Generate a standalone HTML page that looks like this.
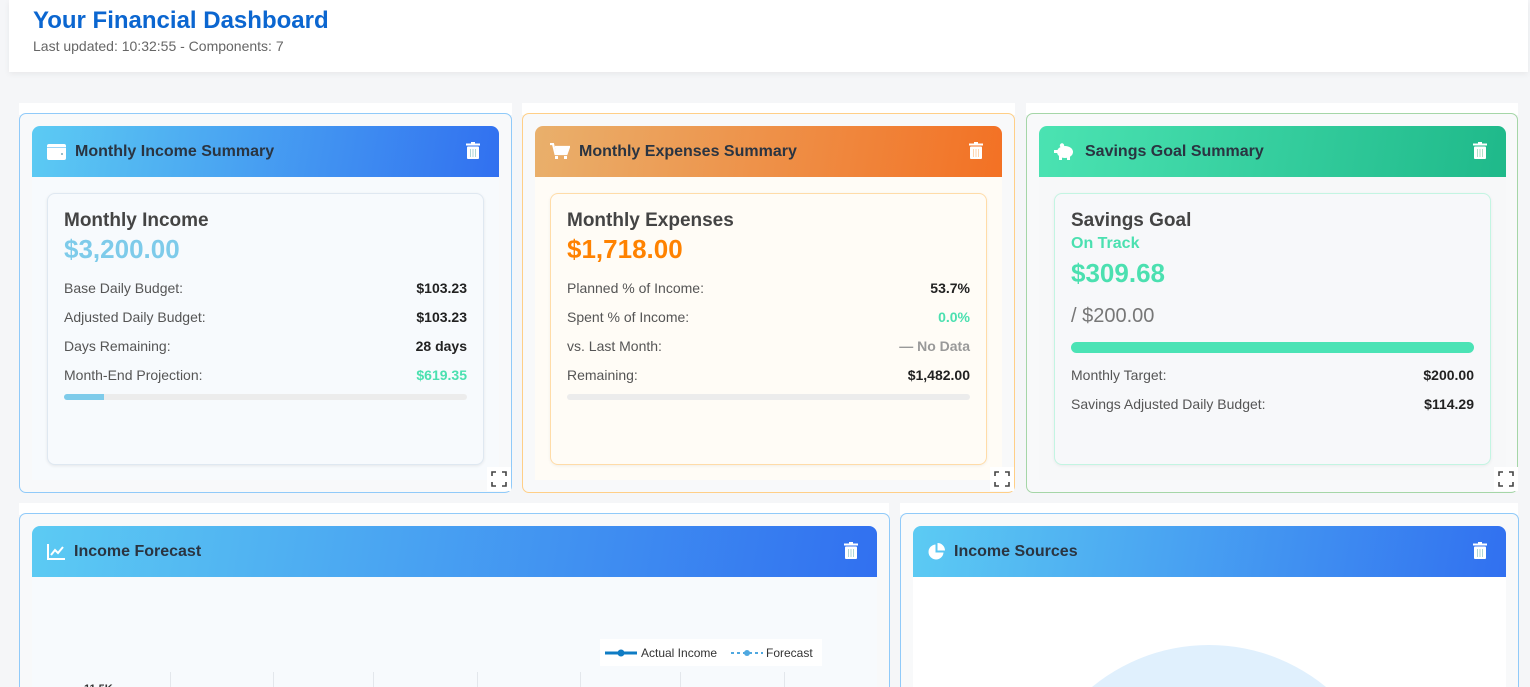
<!DOCTYPE html>
<html style="overflow:hidden;height:687px"><head><meta charset="utf-8"><style>
*{box-sizing:border-box;margin:0;padding:0}
body{width:1530px;height:687px;overflow:hidden;background:#f5f6f8;font-family:"Liberation Sans",sans-serif;position:relative}
.a{position:absolute}
.top{left:9px;top:0;width:1519px;height:72px;background:#fff;box-shadow:0 2px 6px rgba(0,0,0,.06)}
.top h1{position:absolute;left:24px;top:7px;font-size:24px;color:#0b66d0;font-weight:bold}
.top p{position:absolute;left:24px;top:38px;font-size:14px;color:#666}
.strip{background:#fff;height:12px}
.box{border-radius:7px;background:#f8f9fa;overflow:hidden}
.hdr{border-radius:8px 8px 0 0;height:51px;color:#2a3441;font-weight:bold;font-size:16px;display:flex;align-items:center;padding-left:15px}
.hdr svg.ic{margin-right:9px}
.trash{position:absolute;right:19px;top:16px}
.inner{border-radius:8px;padding:15px 16px}
.inner h2{font-size:19px;color:#444;font-weight:bold;line-height:24px}
.amt{font-size:26px;font-weight:bold;line-height:32px}
.row{display:flex;justify-content:space-between;font-size:14px;color:#555;height:29px;align-items:center}
.row b{color:#222}
.bar{height:6px;border-radius:3px;background:#ececec;margin-top:5px;overflow:hidden}
</style></head><body>
<div class="a top"><h1>Your Financial Dashboard</h1><p>Last updated: 10:32:55 - Components: 7</p></div>

<!-- card 1 -->
<div class="a strip" style="left:19px;top:103px;width:493px"></div>
<div class="a box" style="left:19px;top:113px;width:493px;height:380px;border:1px solid #90caf9"></div>
<div class="a hdr" style="left:32px;top:126px;width:467px;background:linear-gradient(100deg,#5ccbf3,#3170f0)">
<svg class="ic" width="19" height="16" viewBox="0 0 19 16"><rect x="0" y="0" width="19" height="16" rx="2" fill="#fff"/><rect x="0" y="3" width="19" height="1" fill="#9cd4f7"/><circle cx="15" cy="10" r="1" fill="#7ab"/></svg>Monthly Income Summary
<svg class="trash" width="14" height="17" viewBox="0 0 14 17"><rect x="0" y="1.5" width="14" height="2" fill="#fff"/><rect x="5" y="0" width="4" height="2" fill="#fff"/><rect x="1" y="4.5" width="12" height="12.5" rx="1" fill="#fff"/><path d="M4.5 7v8M7 7v8M9.5 7v8" stroke="#9cc" stroke-width="0.8"/></svg></div>
<div class="a" style="left:32px;top:177px;width:467px;height:303px;background:#f7fafd"></div>
<div class="a inner" style="left:47px;top:193px;width:437px;height:272px;background:#f7fafd;border:1px solid #dfe8f1;box-shadow:0 1px 3px rgba(0,0,0,.08)">
<h2>Monthly Income</h2><div class="amt" style="color:#7ecbea">$3,200.00</div>
<div style="height:8px"></div>
<div class="row"><span>Base Daily Budget:</span><b>$103.23</b></div>
<div class="row"><span>Adjusted Daily Budget:</span><b>$103.23</b></div>
<div class="row"><span>Days Remaining:</span><b>28 days</b></div>
<div class="row"><span>Month-End Projection:</span><b style="color:#4be0b0">$619.35</b></div>
<div class="bar"><div style="width:10%;height:100%;background:#7ecbea"></div></div>
</div>

<!-- card 2 -->
<div class="a strip" style="left:522px;top:103px;width:493px"></div>
<div class="a box" style="left:522px;top:113px;width:493px;height:380px;border:1px solid #ffcf87"></div>
<div class="a hdr" style="left:535px;top:126px;width:467px;background:linear-gradient(100deg,#e9b06c,#f37124)">
<svg class="ic" width="20" height="17" viewBox="0 0 20 17"><path d="M0 1h3l2.5 10h11L19 4H5" fill="none" stroke="#fff" stroke-width="2.2"/><path d="M5 4h14l-2 6H6z" fill="#fff"/><rect x="5" y="13" width="3" height="3" fill="#fff"/><rect x="14" y="13" width="3" height="3" fill="#fff"/></svg>Monthly Expenses Summary
<svg class="trash" width="14" height="17" viewBox="0 0 14 17"><rect x="0" y="1.5" width="14" height="2" fill="#fff"/><rect x="5" y="0" width="4" height="2" fill="#fff"/><rect x="1" y="4.5" width="12" height="12.5" rx="1" fill="#fff"/><path d="M4.5 7v8M7 7v8M9.5 7v8" stroke="#fc9" stroke-width="0.8"/></svg></div>
<div class="a" style="left:535px;top:177px;width:467px;height:303px;background:#fffcf6"></div>
<div class="a inner" style="left:550px;top:193px;width:437px;height:272px;background:#fffcf6;border:1px solid #ffdca8;box-shadow:0 1px 3px rgba(0,0,0,.06)">
<h2>Monthly Expenses</h2><div class="amt" style="color:#ff8200">$1,718.00</div>
<div style="height:8px"></div>
<div class="row"><span>Planned % of Income:</span><b>53.7%</b></div>
<div class="row"><span>Spent % of Income:</span><b style="color:#4be0b0">0.0%</b></div>
<div class="row"><span>vs. Last Month:</span><b style="color:#999">— No Data</b></div>
<div class="row"><span>Remaining:</span><b>$1,482.00</b></div>
<div class="bar"></div>
</div>

<!-- card 3 -->
<div class="a strip" style="left:1026px;top:103px;width:492px"></div>
<div class="a box" style="left:1026px;top:113px;width:492px;height:380px;border:1px solid #a5d6a7"></div>
<div class="a hdr" style="left:1039px;top:126px;width:467px;background:linear-gradient(100deg,#4be3b2,#1fb98a)">
<svg class="ic" width="22" height="17" viewBox="0 0 22 17"><ellipse cx="11" cy="9" rx="8" ry="6" fill="#fff"/><circle cx="8" cy="2.5" r="2.2" fill="#fff"/><rect x="5" y="12" width="3" height="5" fill="#fff"/><rect x="13" y="12" width="3" height="5" fill="#fff"/><rect x="0" y="7" width="4" height="3" fill="#fff"/></svg>Savings Goal Summary
<svg class="trash" width="14" height="17" viewBox="0 0 14 17"><rect x="0" y="1.5" width="14" height="2" fill="#fff"/><rect x="5" y="0" width="4" height="2" fill="#fff"/><rect x="1" y="4.5" width="12" height="12.5" rx="1" fill="#fff"/><path d="M4.5 7v8M7 7v8M9.5 7v8" stroke="#9db" stroke-width="0.8"/></svg></div>
<div class="a" style="left:1039px;top:177px;width:467px;height:303px;background:#f7f8f9"></div>
<div class="a inner" style="left:1054px;top:193px;width:437px;height:272px;background:#f7f8fa;border:1px solid #c3f5e2;box-shadow:0 1px 3px rgba(0,0,0,.06)">
<h2>Savings Goal</h2>
<div style="color:#4be0b0;font-weight:bold;font-size:16px;line-height:22px">On Track</div>
<div class="amt" style="color:#4be0b0;line-height:36px">$309.68</div>
<div style="font-size:20px;color:#777;margin-top:12px;line-height:26px">/ $200.00</div>
<div style="height:11px;border-radius:6px;background:#4be3b5;margin-top:13px"></div>
<div style="height:7px"></div>
<div class="row"><span>Monthly Target:</span><b>$200.00</b></div>
<div class="row"><span>Savings Adjusted Daily Budget:</span><b>$114.29</b></div>
</div>

<!-- fullscreen buttons -->
<svg class="a" style="left:487px;top:467px" width="24" height="24" viewBox="0 0 24 24"><rect width="24" height="24" fill="#fff"/><path d="M5 9V5h4M15 5h4v4M5 15v4h4M15 19h4v-4" fill="none" stroke="#444" stroke-width="1.6"/></svg>
<svg class="a" style="left:990px;top:467px" width="24" height="24" viewBox="0 0 24 24"><rect width="24" height="24" fill="#fff"/><path d="M5 9V5h4M15 5h4v4M5 15v4h4M15 19h4v-4" fill="none" stroke="#444" stroke-width="1.6"/></svg>
<svg class="a" style="left:1494px;top:467px" width="24" height="24" viewBox="0 0 24 24"><rect width="24" height="24" fill="#fff"/><path d="M5 9V5h4M15 5h4v4M5 15v4h4M15 19h4v-4" fill="none" stroke="#444" stroke-width="1.6"/></svg>

<!-- bottom left -->
<div class="a strip" style="left:19px;top:503px;width:870px"></div>
<div class="a box" style="left:19px;top:513px;width:871px;height:174px;border:1px solid #90caf9;border-bottom:none;border-radius:7px 7px 0 0"></div>
<div class="a hdr" style="left:32px;top:526px;width:845px;background:linear-gradient(100deg,#5ccbf3,#3170f0)">
<svg class="ic" width="18" height="16" viewBox="0 0 18 16"><path d="M1 0v15h17" fill="none" stroke="#fff" stroke-width="2"/><path d="M4 11l4-5 3 3 5-6" fill="none" stroke="#fff" stroke-width="2"/></svg>Income Forecast
<svg class="trash" width="14" height="17" viewBox="0 0 14 17"><rect x="0" y="1.5" width="14" height="2" fill="#fff"/><rect x="5" y="0" width="4" height="2" fill="#fff"/><rect x="1" y="4.5" width="12" height="12.5" rx="1" fill="#fff"/><path d="M4.5 7v8M7 7v8M9.5 7v8" stroke="#9cc" stroke-width="0.8"/></svg></div>
<div class="a" style="left:32px;top:577px;width:845px;height:110px;background:#f7fafd"></div>
<div class="a" style="left:600px;top:639px;width:222px;height:27px;background:#fff;font-size:12px;color:#333">
<svg class="a" style="left:5px;top:9px" width="32" height="10"><path d="M0 5h32" stroke="#0f7cc4" stroke-width="3"/><circle cx="16" cy="5" r="3.5" fill="#0f7cc4"/></svg>
<span class="a" style="left:41px;top:7px">Actual Income</span>
<svg class="a" style="left:131px;top:9px" width="32" height="10"><path d="M0 5h32" stroke="#4fa8e0" stroke-width="2" stroke-dasharray="3 3"/><circle cx="16" cy="5" r="3" fill="#4fa8e0"/></svg>
<span class="a" style="left:166px;top:7px">Forecast</span></div>
<div class="a" style="left:170px;top:672px;width:1px;height:15px;background:#e3e7ec"></div>
<div class="a" style="left:273px;top:672px;width:1px;height:15px;background:#e3e7ec"></div>
<div class="a" style="left:373px;top:672px;width:1px;height:15px;background:#e3e7ec"></div>
<div class="a" style="left:477px;top:672px;width:1px;height:15px;background:#e3e7ec"></div>
<div class="a" style="left:580px;top:672px;width:1px;height:15px;background:#e3e7ec"></div>
<div class="a" style="left:680px;top:672px;width:1px;height:15px;background:#e3e7ec"></div>
<div class="a" style="left:784px;top:672px;width:1px;height:15px;background:#e3e7ec"></div>
<div class="a" style="left:84px;top:683px;font-size:11px;color:#333;font-weight:bold;height:4px;overflow:hidden;line-height:12px">11.5K</div>

<!-- bottom right -->
<div class="a strip" style="left:900px;top:503px;width:618px"></div>
<div class="a box" style="left:900px;top:513px;width:619px;height:174px;border:1px solid #90caf9;border-bottom:none;border-radius:7px 7px 0 0"></div>
<div class="a hdr" style="left:913px;top:526px;width:593px;background:linear-gradient(100deg,#5ccbf3,#3170f0)">
<svg class="ic" width="17" height="17" viewBox="0 0 17 17"><path d="M7.5 1.5A7.5 7.5 0 1 0 15.5 9.5H7.5z" fill="#fff"/><path d="M9.5 0v7.5H17A7.5 7.5 0 0 0 9.5 0z" fill="#fff"/></svg>Income Sources
<svg class="trash" width="14" height="17" viewBox="0 0 14 17"><rect x="0" y="1.5" width="14" height="2" fill="#fff"/><rect x="5" y="0" width="4" height="2" fill="#fff"/><rect x="1" y="4.5" width="12" height="12.5" rx="1" fill="#fff"/><path d="M4.5 7v8M7 7v8M9.5 7v8" stroke="#9cc" stroke-width="0.8"/></svg></div>
<div class="a" style="left:913px;top:577px;width:593px;height:110px;background:#fff;overflow:hidden">
<div class="a" style="left:112px;top:68px;width:368px;height:368px;border-radius:50%;background:#e0f0fd"></div></div>
</body></html>
